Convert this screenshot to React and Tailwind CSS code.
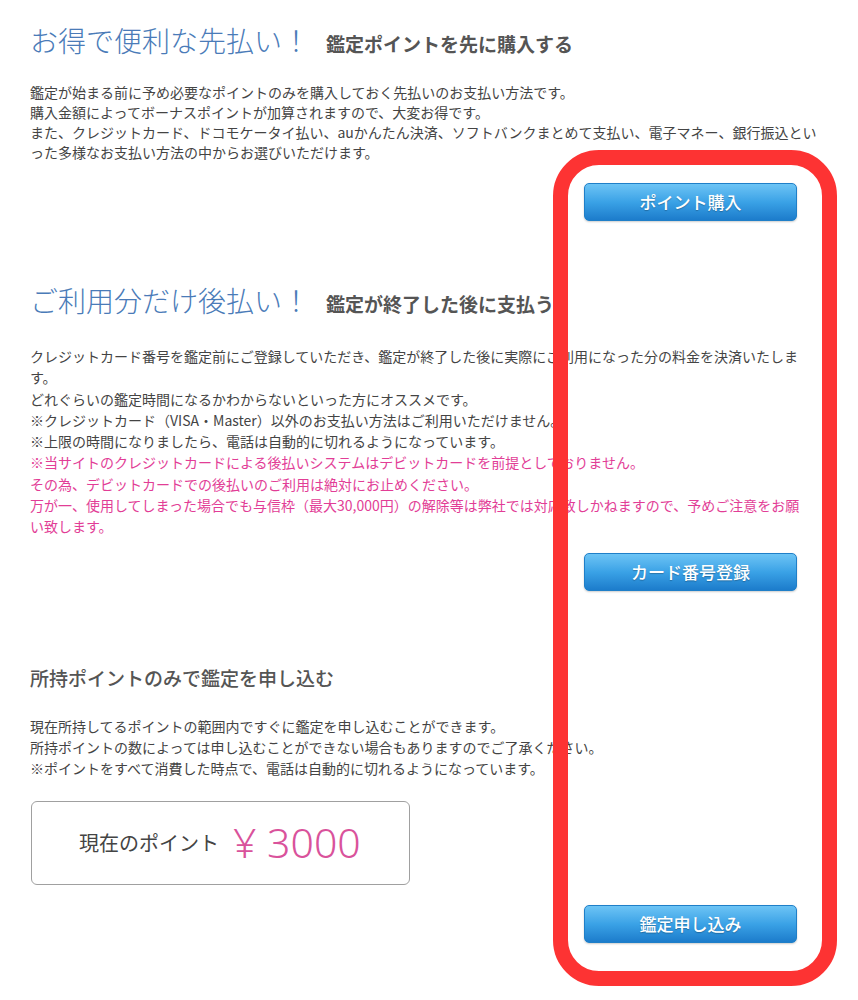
import React from "react";

const jp = "font-['Noto_Sans_CJK_JP','Noto_Sans',sans-serif]";

function BlueButton({ children }) {
  return (
    <div className="flex justify-end pr-[23px]">
      <button
        className={`w-[213px] h-[38px] rounded-[5px] border border-[#1f7fc8] bg-gradient-to-b from-[#6cc4f5] via-[#3aa2e6] to-[#1c7ccb] text-white text-[17px] font-medium ${jp} [text-shadow:0_1px_1px_rgba(0,0,0,0.25)] shadow-[0_1px_2px_rgba(0,0,0,0.2)]`}
      >
        {children}
      </button>
    </div>
  );
}

function SectionTitle({ main, sub }) {
  return (
    <div className="flex items-baseline">
      <h2 className={`text-[28px] leading-[36px] text-[#4a7bb8] font-light whitespace-nowrap ${jp}`}>
        {main}
      </h2>
      <span className={`ml-[16px] text-[19px] text-[#555] font-bold whitespace-nowrap ${jp}`}>
        {sub}
      </span>
    </div>
  );
}

export default function App() {
  return (
    <div className={`relative w-[858px] min-h-[1000px] bg-white overflow-hidden ${jp}`}>
      <div className="w-[820px] pl-[30px] pt-[22px]">
        {/* 先払い */}
        <SectionTitle main="お得で便利な先払い！" sub="鑑定ポイントを先に購入する" />
        <div className="mt-[23px] text-[14px] leading-[20px] text-[#444]">
          <p>鑑定が始まる前に予め必要なポイントのみを購入しておく先払いのお支払い方法です。</p>
          <p>購入金額によってボーナスポイントが加算されますので、大変お得です。</p>
          <p>
            また、クレジットカード、ドコモケータイ払い、auかんたん決済、ソフトバンクまとめて支払い、電子マネー、銀行振込といった多様なお支払い方法の中からお選びいただけます。
          </p>
        </div>
        <div className="mt-[21px]">
          <BlueButton>ポイント購入</BlueButton>
        </div>

        {/* 後払い */}
        <div className="mt-[61px]">
          <SectionTitle main="ご利用分だけ後払い！" sub="鑑定が終了した後に支払う" />
        </div>
        <div className="mt-[28px] text-[14px] leading-[21.3px] text-[#444]">
          <p>
            クレジットカード番号を鑑定前にご登録していただき、鑑定が終了した後に実際にご利用になった分の料金を決済いたします。
          </p>
          <p>どれぐらいの鑑定時間になるかわからないといった方にオススメです。</p>
          <p>※クレジットカード（VISA・Master）以外のお支払い方法はご利用いただけません。</p>
          <p>※上限の時間になりましたら、電話は自動的に切れるようになっています。</p>
          <div className="text-[#e23d96]">
            <p>※当サイトのクレジットカードによる後払いシステムはデビットカードを前提としておりません。</p>
            <p>その為、デビットカードでの後払いのご利用は絶対にお止めください。</p>
            <p>
              万が一、使用してしまった場合でも与信枠（最大30,000円）の解除等は弊社では対応致しかねますので、予めご注意をお願
              <br />
              い致します。
            </p>
          </div>
        </div>
        <div className="mt-[15px]">
          <BlueButton>カード番号登録</BlueButton>
        </div>

        {/* 所持ポイント */}
        <h3 className="mt-[73px] text-[19px] leading-[28px] font-medium text-[#555]">
          所持ポイントのみで鑑定を申し込む
        </h3>
        <div className="mt-[24px] text-[14px] leading-[21px] text-[#444]">
          <p>現在所持してるポイントの範囲内ですぐに鑑定を申し込むことができます。</p>
          <p>所持ポイントの数によっては申し込むことができない場合もありますのでご了承ください。</p>
          <p>※ポイントをすべて消費した時点で、電話は自動的に切れるようになっています。</p>
        </div>
        <div className="mt-[22px] w-[379px] h-[84px] ml-px rounded-[6px] border border-[#a0a0a0] flex items-center pl-[47px]">
          <span className="text-[20px] text-[#444]">現在のポイント</span>
          <span className="ml-[14px] text-[41px] leading-none text-[#d9529b] font-['Noto_Sans','Liberation_Sans',sans-serif] font-light">
            ¥ 3000
          </span>
        </div>
        <div className="mt-[20px]">
          <BlueButton>鑑定申し込み</BlueButton>
        </div>
      </div>

      {/* red highlight annotation */}
      <div className="pointer-events-none absolute left-[553px] top-[150px] w-[284px] h-[836px] rounded-[46px] border-[15px] border-[#fd3333]" />
    </div>
  );
}
